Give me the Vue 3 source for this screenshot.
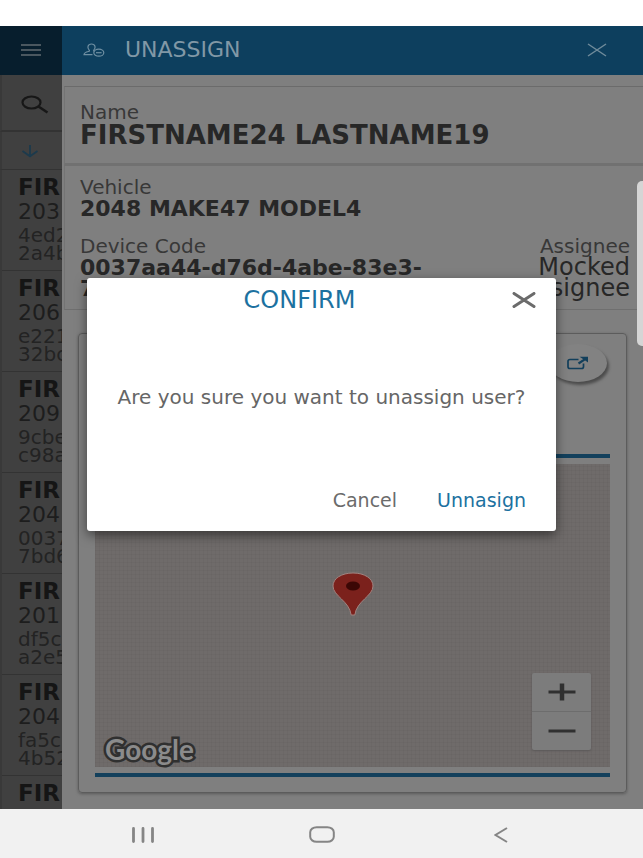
<script setup>
const people = [
  { name: 'FIR', vehicle: '203', code: ['4ed2', '2a4b'] },
  { name: 'FIR', vehicle: '206', code: ['e221', '32bc'] },
  { name: 'FIR', vehicle: '209', code: ['9cbe', 'c98a'] },
  { name: 'FIR', vehicle: '204', code: ['0037', '7bd6'] },
  { name: 'FIR', vehicle: '201', code: ['df5c', 'a2e5'] },
  { name: 'FIR', vehicle: '204', code: ['fa5c', '4b52'] },
  { name: 'FIR', vehicle: '', code: [] }
]
</script>

<template>
  <div class="screen">
    <div class="status"></div>

    <div class="body">
      <aside class="side">
        <button class="menu" aria-label="Menu">
          <svg width="22" height="12" viewBox="0 0 22 12"><path d="M1 1H21M1 6H21M1 11H21" stroke="#626b70" stroke-width="1.6" /></svg>
        </button>
        <button class="search" aria-label="Search">
          <svg width="28" height="20" viewBox="0 0 28 20" fill="none" stroke="#171717">
            <ellipse cx="10.500" cy="7.500" rx="9" ry="6" stroke-width="2.200" />
            <path d="M17.500 11.500L26.500 17.500" stroke-width="2.600" />
          </svg>
        </button>
        <button class="sort" aria-label="Sort">
          <svg width="18" height="14" viewBox="0 0 18 14" fill="none" stroke="#1c3a4c" stroke-width="1.800"><path d="M9 1V12M1.500 7L9 12.300L16.500 7" /></svg>
        </button>
        <ul class="people">
          <li v-for="(p, i) in people" :key="i" class="person">
            <strong class="person-name">{{ p.name }}</strong>
            <span class="person-vehicle">{{ p.vehicle }}</span>
            <span v-for="part in p.code" :key="part" class="person-code">{{ part }}</span>
          </li>
        </ul>
      </aside>

      <main class="detail">
        <header class="bar">
          <svg width="22" height="14" viewBox="0 0 22 14" fill="none" stroke="#6f8fa2" stroke-width="1.200">
            <path d="M9.500 11.700H1C1.200 9.400 3.200 9 5.500 8.500C6.700 8.200 6.700 7.500 6 6.800C4.200 5 4.400 1 8.500 1C12.600 1 12.800 5 11 6.800C10.400 7.500 10.600 8 11.500 8.200" />
            <ellipse cx="15.800" cy="9.700" rx="5" ry="3.500" /><path d="M13 9.700H18.600" />
          </svg>
          <h1 class="bar-title">UNASSIGN</h1>
          <button class="bar-close" aria-label="Close">
            <svg width="20" height="14" viewBox="0 0 20 14"><path d="M1 1L19 13M19 1L1 13" stroke="#6f8b9b" stroke-width="1.500" /></svg>
          </button>
        </header>

        <section class="panel name-panel">
          <span class="label">Name</span>
          <strong class="value big">FIRSTNAME24 LASTNAME19</strong>
        </section>

        <section class="panel vehicle-panel">
          <span class="label">Vehicle</span>
          <strong class="value">2048 MAKE47 MODEL4</strong>
          <div class="pair">
            <div class="device">
              <span class="label">Device Code</span>
              <strong class="value">0037aa44-d76d-4abe-83e3-7bd6</strong>
            </div>
            <div class="assignee">
              <span class="label">Assignee</span>
              <span class="value plain">Mocked Assignee</span>
            </div>
          </div>
        </section>

        <section class="card">
          <div class="card-top">
            <button class="open" aria-label="Open map">
              <svg width="22" height="14" viewBox="0 0 22 14" fill="none" stroke="#123f5b" stroke-width="1.700">
                <path d="M11.500 3.500H3Q1 3.500 1 5.200V10.800Q1 12.500 3 12.500H14.500Q16.500 12.500 16.500 10.800V7.500" />
                <path d="M11.500 7.500L18.500 2.800" stroke-width="2.200" /><path d="M12.500 .8H21V6.500L18.300 4.500L16 3Z" fill="#123f5b" stroke="none" />
              </svg>
            </button>
          </div>
          <div class="map">
            <svg class="pin" width="42" height="44" viewBox="0 0 42 44">
              <path d="M21 1C9.500 1 1 6.500 1 14C1 24 17.500 29 19.200 43H22.800C24.500 29 41 24 41 14C41 6.500 32.500 1 21 1Z" fill="#7b211c" stroke="#a1827f" stroke-width="1" />
              <ellipse cx="21" cy="14" rx="7" ry="4.500" fill="#3b0705" />
            </svg>
            <span class="google">Google</span>
            <div class="zoom">
              <button class="zoom-btn" aria-label="Zoom in">
                <svg width="28" height="18" viewBox="0 0 28 18"><path d="M.5 9H27.500" stroke="#303030" stroke-width="3" /><path d="M14 .5V17.500" stroke="#303030" stroke-width="4.500" /></svg>
              </button>
              <button class="zoom-btn" aria-label="Zoom out">
                <svg width="28" height="18" viewBox="0 0 28 18"><path d="M.5 9H27.500" stroke="#303030" stroke-width="3" /></svg>
              </button>
            </div>
          </div>
        </section>
      </main>
    </div>

    <nav class="nav">
      <button class="nav-btn" aria-label="Recent apps">
        <svg width="24" height="16" viewBox="0 0 24 16"><path d="M2.500 1.500V14.500M12 1.500V14.500M21.500 1.500V14.500" stroke="#858585" stroke-width="2.800" stroke-linecap="round" /></svg>
      </button>
      <button class="nav-btn" aria-label="Home">
        <svg width="26" height="17" viewBox="0 0 26 17"><rect x="1.200" y="1.200" width="23.600" height="14.600" rx="6.500" ry="5" fill="none" stroke="#858585" stroke-width="2" /></svg>
      </button>
      <button class="nav-btn" aria-label="Back">
        <svg width="14" height="16" viewBox="0 0 14 16"><path d="M13 1L1.500 8L13 15" fill="none" stroke="#858585" stroke-width="2" /></svg>
      </button>
    </nav>

    <div class="handle"></div>

    <div class="overlay">
      <div class="dialog" role="dialog" aria-labelledby="dialog-title">
        <div class="dialog-head">
          <h2 id="dialog-title" class="dialog-title">CONFIRM</h2>
          <button class="dialog-close" aria-label="Close dialog">
            <svg width="24" height="16" viewBox="0 0 24 16"><path d="M2 1.500L22 14.500M22 1.500L2 14.500" stroke="#6b6b6b" stroke-width="3" stroke-linecap="round" /></svg>
          </button>
        </div>
        <p class="message">Are you sure you want to unassign user?</p>
        <div class="actions">
          <button class="action">Cancel</button>
          <button class="action primary">Unnasign</button>
        </div>
      </div>
    </div>
  </div>
</template>

<style>
body { margin: 0; background: #fff; }
</style>

<style scoped>
* { box-sizing: border-box; }
button {
  display: flex;
  align-items: center;
  justify-content: center;
  margin: 0;
  padding: 0;
  border: 0;
  background: none;
  font: inherit;
  color: inherit;
}
svg { display: block; flex: none; }
.screen {
  position: relative;
  display: flex;
  flex-direction: column;
  height: 100vh;
  overflow: hidden;
  font-family: "DejaVu Sans", Roboto, sans-serif;
}
.status { flex: none; height: 26px; background: #fff; }
.body { display: flex; flex: 1; min-height: 0; }

.side {
  display: flex;
  flex-direction: column;
  flex: none;
  width: 62px;
  overflow: hidden;
  background: #404040;
}
.menu { flex: none; height: 49px; padding-bottom: 2px; background: #071e2d; }
.search { flex: none; height: 57px; padding: 4px 0 0 6px; border-bottom: 2px solid #333; }
.sort { flex: none; height: 38px; justify-content: flex-start; padding-left: 19px; border-bottom: 1px solid #333; }
.search, .sort, .people { border-left: 2px solid #393939; }
.people { margin: 0; padding: 0; list-style: none; }
.person {
  display: flex;
  flex-direction: column;
  height: 101px;
  padding: 4px 0 0 16px;
  border-bottom: 1px solid #333;
  white-space: nowrap;
}
.person-name { font-size: 23px; line-height: 26px; color: #151515; }
.person-vehicle { margin-bottom: 2px; font-size: 22px; line-height: 24px; color: #1d1d1d; }
.person-code { font-size: 20px; line-height: 18px; color: #232323; }

.detail {
  display: flex;
  flex-direction: column;
  flex: 1;
  min-width: 0;
  background: #7f7f7f;
}
.bar {
  display: flex;
  align-items: center;
  flex: none;
  height: 49px;
  padding: 0 36px 2px 21px;
  background: #0d3f5e;
}
.bar-title { flex: 1; margin: 0 0 0 20px; font-size: 22px; line-height: 24px; font-weight: 400; color: #8198a6; }
.panel { display: flex; flex-direction: column; margin-left: 2px; border-left: 1px solid #747474; }
.name-panel { margin-top: 11px; padding: 15px 14px 16px 15px; border-top: 1px solid #6b6b6b; border-bottom: 3px solid #717171; }
.vehicle-panel { padding: 11px 13px 10px 15px; border-bottom: 1px solid #6f6f6f; }
.label { display: block; font-size: 20px; line-height: 21px; color: #383838; }
.value { display: block; font-size: 22px; line-height: 21px; color: #272727; }
.value.big { font-size: 26px; line-height: 24px; }
.value.plain { font-size: 24px; }
.pair { display: flex; justify-content: space-between; margin-top: 17px; }
.device { width: 66%; }
.assignee { width: 110px; text-align: right; }

.card {
  display: flex;
  flex-direction: column;
  flex: 1;
  min-height: 0;
  margin: 23px 16px 16px;
  padding: 0 16px 15px;
  border: 1px solid #5c5c5c;
  border-radius: 4px;
  box-shadow: 0 1px 3px #5a5a5a;
}
.card-top { display: flex; justify-content: flex-end; align-items: flex-start; height: 124px; padding: 10px 3px 0; border-bottom: 4px solid #13405c; }
.open { width: 58px; height: 38px; border-radius: 50%; background: #828282; box-shadow: 2px 3px 3px #4c4c4c; }
.map {
  position: relative;
  flex: 1;
  margin-top: 6px;
  background:
    repeating-linear-gradient(90deg, rgba(0, 0, 0, .03) 0 1px, transparent 1px 4px),
    repeating-linear-gradient(0deg, rgba(0, 0, 0, .03) 0 1px, transparent 1px 4px),
    #6f6b6a;
}
.card::after { content: ""; height: 4px; margin-top: 6px; background: #13405c; }
.pin { position: absolute; left: 50%; bottom: 50%; margin-left: -21px; }
.google {
  position: absolute;
  left: 10px;
  bottom: 2px;
  font: 700 28px/32px Lato, sans-serif;
  color: #8b8b8b;
  -webkit-text-stroke: 5px #303030;
  paint-order: stroke fill;
}
.zoom { position: absolute; right: 19px; bottom: 17px; width: 59px; border-radius: 2px; background: #7c7c7c; box-shadow: 0 1px 2px #5c5959; }
.zoom-btn { width: 100%; height: 38px; }
.zoom-btn + .zoom-btn { height: 39px; border-top: 1px solid #6d6d6d; }

.nav { display: flex; flex: none; height: 49px; padding: 0 53px; background: #f1f1f1; }
.nav-btn { flex: 1; padding-top: 2px; }

.handle { position: absolute; top: 181px; right: 0; width: 6px; height: 165px; border-radius: 5px 0 0 5px; background: #d5d5d5; }
.overlay { position: absolute; inset: 0; display: flex; align-items: flex-start; padding: 278px 87px 0; }
.dialog { flex: 1; min-width: 0; border-radius: 3px; background: #fff; box-shadow: 0 4px 12px rgba(0, 0, 0, .5); }
.dialog-head { display: flex; align-items: center; height: 44px; padding: 0 20px 0 0; }
.dialog-title { flex: 1; margin: 0; font-size: 24px; line-height: 28px; font-weight: 400; text-align: center; color: #1c71a0; }
.message { margin: 0; padding: 62px 0 76px; font-size: 20px; line-height: 26px; text-align: center; white-space: nowrap; color: #666; }
.actions { display: flex; justify-content: flex-end; gap: 40px; padding: 0 30px 17px; font-size: 19px; line-height: 28px; color: #6b6b6b; }
.primary { color: #1c71a0; }
</style>
